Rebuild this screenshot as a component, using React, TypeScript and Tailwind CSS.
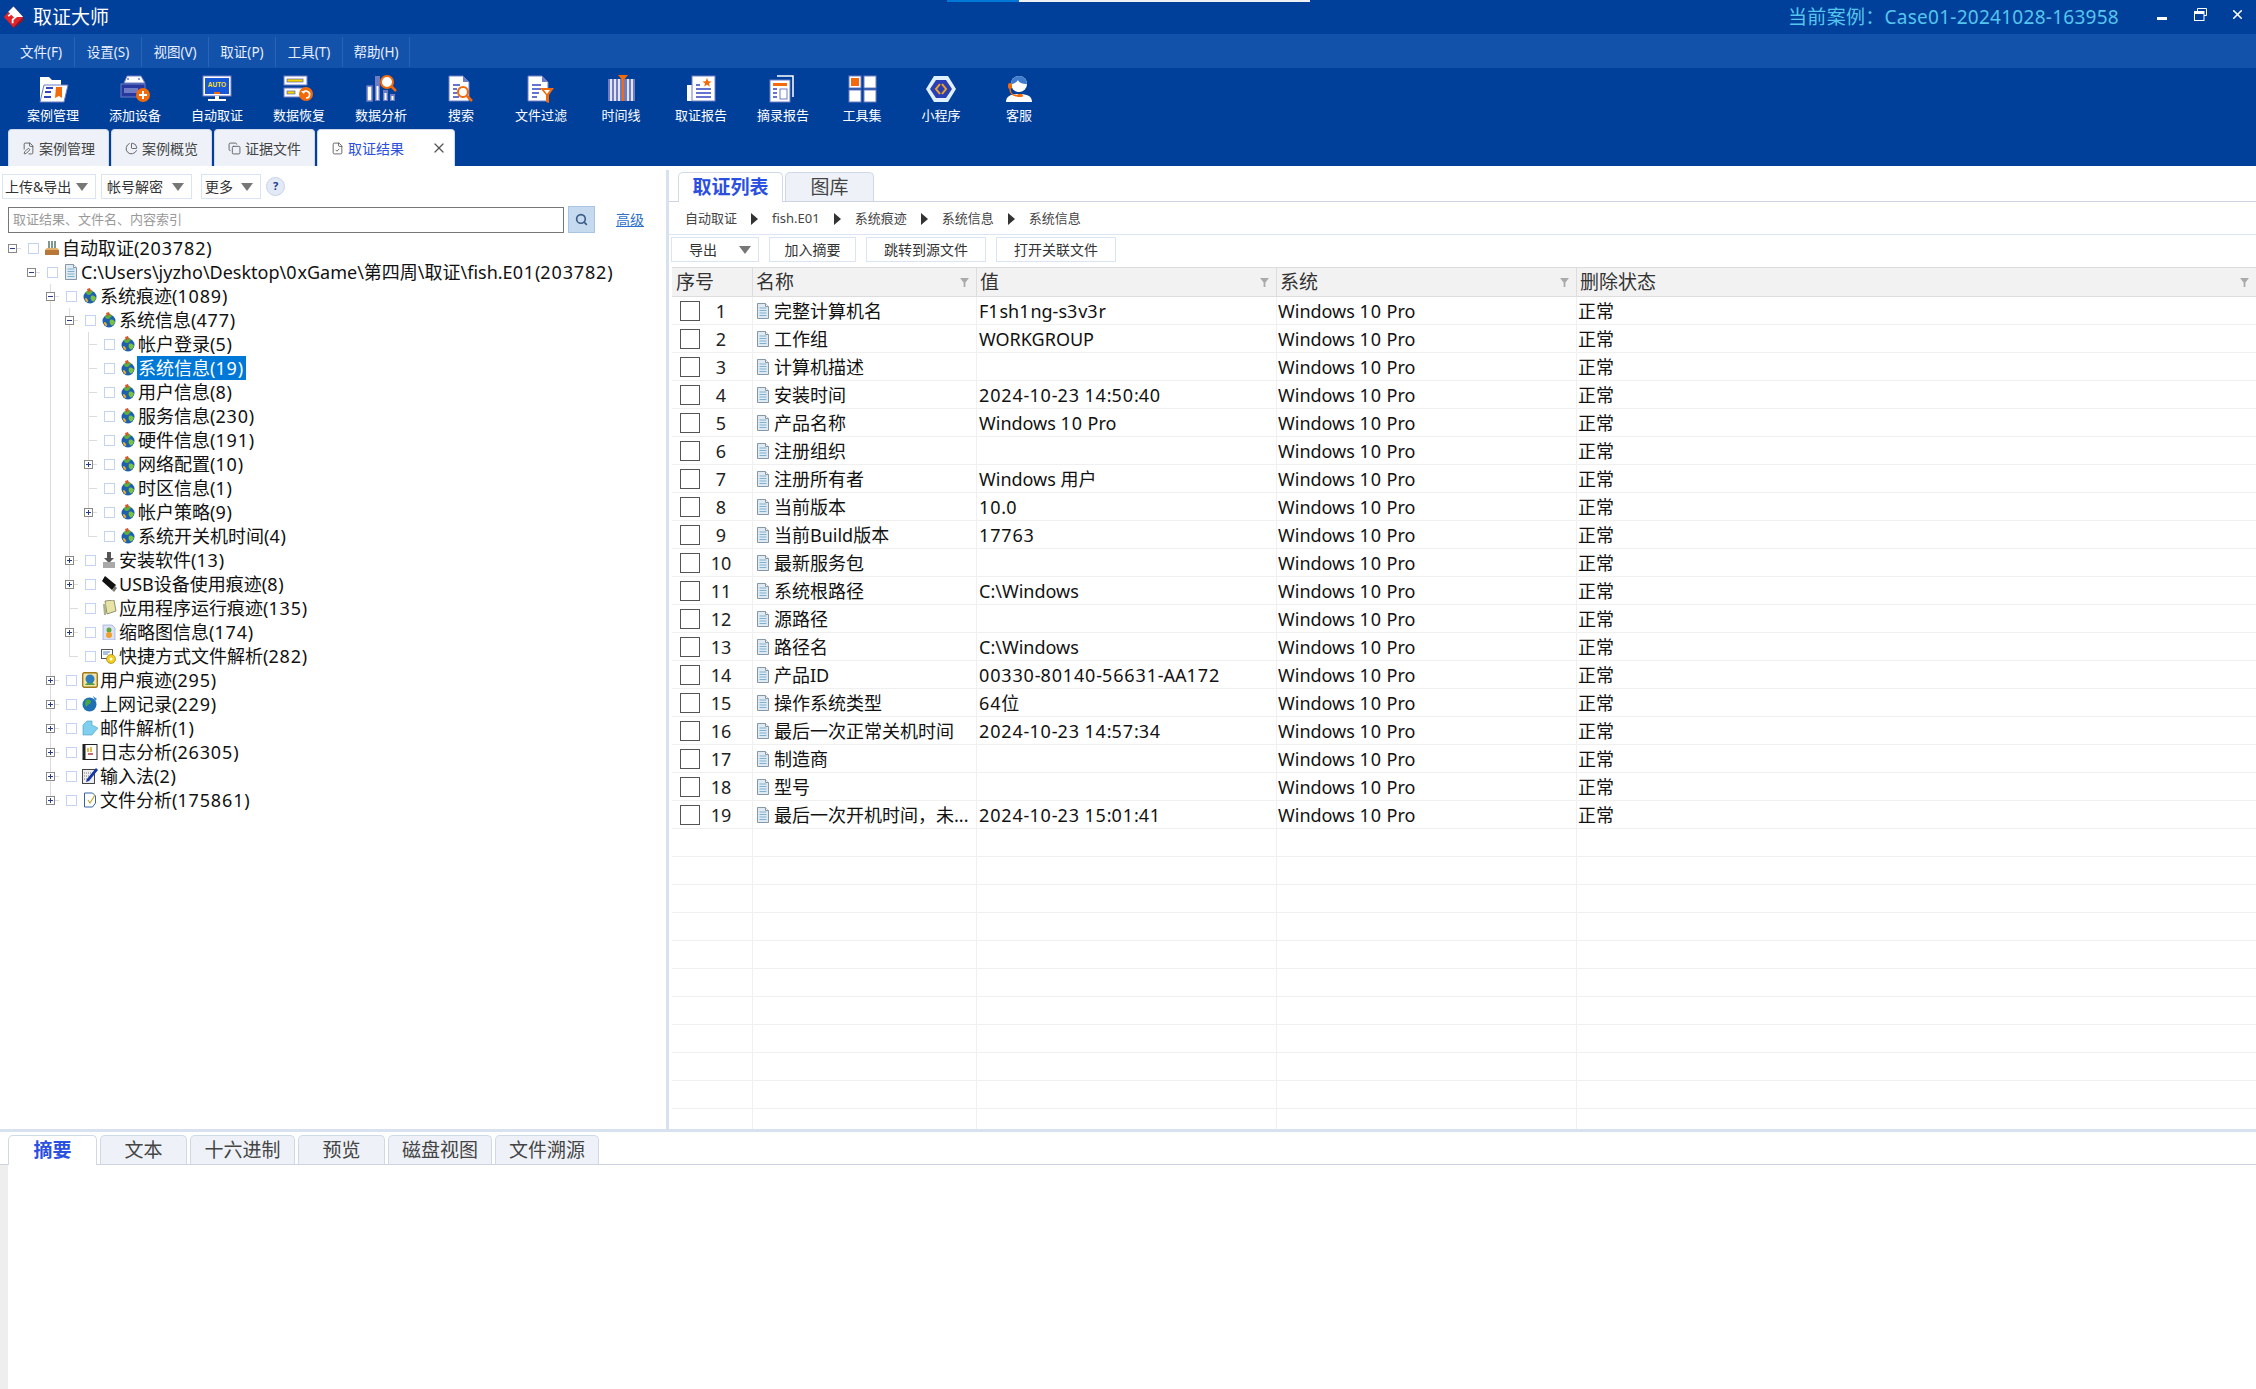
import React from "react";
import { ChartPie, Copy, FileCheck, FilePen, Search, X } from "lucide-react";

const P = "#6f7cc4";
const O = "#f26a0a";

const toolIcons: Record<string, React.ReactNode> = {
  case: (
    <>
      <path d="M3 3h9l3 3h9v20H3z" fill="#fff" />
      <path d="M7 11h24l-4 17H3z" fill="#fff" stroke={P} strokeWidth="1" />
      <path d="M9 14h7M8 18h6M7 23h7" stroke="#3346c0" strokeWidth="2" />
      <path d="M19 13h6v11l-3-2-4 2z" fill={O} />
    </>
  ),
  add: (
    <>
      <path d="M5 9 8 2h14l4 7z" fill="#fff" stroke={P} />
      <rect x="2" y="10" width="24" height="13" fill="#27389f" stroke={P} />
      <rect x="5" y="14" width="14" height="5" fill={P} />
      <circle cx="9" cy="5" r="1" fill={P} />
      <circle cx="20" cy="5" r="1" fill={P} />
      <circle cx="24" cy="21" r="7" fill={O} />
      <path d="M20 21h8M24 17v8" stroke="#fff" strokeWidth="2" />
    </>
  ),
  auto: (
    <>
      <rect x="2" y="2" width="28" height="20" fill="#fff" stroke={P} />
      <rect x="4" y="4" width="24" height="16" fill="#1557d6" />
      <text x="16" y="13" textAnchor="middle" fontSize="6.5" fontWeight="700" fill="#ffe021" fontFamily="Liberation Sans, sans-serif">AUTO</text>
      <rect x="13" y="18" width="6" height="2" fill={O} />
      <rect x="14" y="22" width="4" height="3" fill="#fff" />
      <rect x="7" y="25" width="18" height="2" fill="#fff" />
    </>
  ),
  recover: (
    <>
      <rect x="1" y="2" width="23" height="9" fill="#fff" stroke={P} />
      <rect x="4" y="5" width="16" height="3" fill="#f3d400" stroke="#3346c0" strokeWidth=".6" />
      <rect x="1" y="14" width="23" height="9" fill="#fff" stroke={P} />
      <rect x="4" y="17" width="8" height="3" fill="#f3d400" stroke="#3346c0" strokeWidth=".6" />
      <circle cx="23" cy="20" r="7" fill={O} />
      <path d="M20 19a3.5 3.5 0 1 1 3 5" fill="none" stroke="#fff" strokeWidth="1.6" />
      <path d="m18 17 3 3 1-3z" fill="#fff" />
    </>
  ),
  analyze: (
    <>
      <rect x="2" y="12" width="5" height="15" fill="#fff" stroke={P} strokeWidth="1.5" />
      <rect x="10" y="2" width="5" height="25" fill={P} />
      <rect x="11.5" y="12" width="2" height="14" fill="#fff" />
      <rect x="18" y="16" width="5" height="11" fill={P} />
      <rect x="19.5" y="19" width="2" height="7" fill="#fff" />
      <rect x="25" y="20" width="5" height="7" fill={P} />
      <rect x="26.5" y="22" width="2" height="4" fill="#fff" />
      <circle cx="22" cy="8" r="6" fill="#fff" stroke={O} strokeWidth="2" />
      <path d="m26 12 5 5" stroke={O} strokeWidth="2.5" />
    </>
  ),
  search: (
    <>
      <path d="M4 2h14l6 6v19H4z" fill="#fff" stroke={P} />
      <path d="M18 2v6h6z" fill={P} />
      <path d="M8 11h7M8 15h4M8 19h4M8 23h6" stroke="#3346c0" strokeWidth="1.6" />
      <circle cx="18" cy="18" r="5" fill="#fff" stroke={O} strokeWidth="2.2" />
      <path d="m22 22 5 5" stroke={O} strokeWidth="2.5" />
    </>
  ),
  filter: (
    <>
      <path d="M3 2h14l6 6v19H3z" fill="#fff" stroke={P} />
      <path d="M17 2v6h6z" fill={P} />
      <path d="M7 11h9M7 15h9M7 19h7M7 23h5" stroke="#3346c0" strokeWidth="1.6" />
      <path d="M15 14h14l-5 7v8l-3-1v-7z" fill={O} />
      <path d="m19 16h6l-3 4z" fill="#fff" />
    </>
  ),
  timeline: (
    <>
      <rect x="3" y="5" width="27" height="22" fill={P} />
      <path d="M6 5v22M10 5v22M14 5v22M23 5v22M27 5v22" stroke="#fff" strokeWidth="1.6" />
      <rect x="17" y="5" width="2" height="22" fill={O} />
      <path d="M13 1h10l-5 6z" fill={O} />
    </>
  ),
  report: (
    <>
      <path d="M2 11h6v16H2z" fill="#fff" />
      <rect x="7" y="2" width="23" height="25" fill="#fff" stroke={P} />
      <path d="M11 11h4M11 15h15M11 19h15M11 23h15" stroke="#3346c0" strokeWidth="1.7" />
      <path d="m22 4 1.3 3.2 3.2.2-2.5 2 .8 3.2-2.8-1.8-2.8 1.8.8-3.2-2.5-2 3.2-.2z" fill={O} />
    </>
  ),
  excerpt: (
    <>
      <path d="M10 2h16v21" fill="none" stroke="#fff" strokeWidth="1.5" />
      <rect x="3" y="6" width="20" height="22" fill="#fff" stroke={P} />
      <rect x="6" y="9" width="14" height="3" fill={O} />
      <path d="M6 15h4M6 19h4M6 23h4" stroke="#3346c0" strokeWidth="1.7" />
      <rect x="13" y="15" width="7" height="10" fill="#fff" stroke={P} />
    </>
  ),
  tools: (
    <>
      <rect x="3" y="2" width="12" height="12" fill="#fff" stroke={P} />
      <rect x="5" y="4" width="8" height="8" fill={O} />
      <rect x="18" y="2" width="12" height="12" fill="#fff" stroke={P} />
      <rect x="3" y="16" width="12" height="12" fill="#fff" stroke={P} />
      <rect x="18" y="16" width="12" height="12" fill="#fff" stroke={P} />
    </>
  ),
  mini: (
    <>
      <path d="M9 2h14l8 13-8 13H9L1 15z" fill="#dff0ff" />
      <path d="M11 6h10l6 9-6 9H11L5 15z" fill="#2a3fb5" />
      <path d="m15 10-4 5 4 5M17 10l4 5-4 5" fill="none" stroke="#f2a41c" strokeWidth="2" />
    </>
  ),
  service: (
    <>
      <path d="M3 28c0-6 5-8 13-8s13 2 13 8z" fill="#fff" />
      <circle cx="16" cy="10" r="8" fill="#fff" />
      <path d="M8 10a8 8 0 0 1 16 0c-4 0-8-1-9-4-1 2-4 4-7 4z" fill="#3f7ccb" />
      <rect x="5" y="9" width="4" height="6" rx="2" fill={O} />
      <path d="M7 15c0 5 4 7 8 7" fill="none" stroke={O} strokeWidth="1.5" />
      <rect x="14" y="20" width="6" height="3" rx="1.5" fill={O} />
    </>
  ),
};

const tools = [
  { k: "case", l: "案例管理", w: "w-[82px]" },
  { k: "add", l: "添加设备", w: "w-[82px]" },
  { k: "auto", l: "自动取证", w: "w-[82px]" },
  { k: "recover", l: "数据恢复", w: "w-[82px]" },
  { k: "analyze", l: "数据分析", w: "w-[82px]" },
  { k: "search", l: "搜索", w: "w-[78px]" },
  { k: "filter", l: "文件过滤", w: "w-[82px]" },
  { k: "timeline", l: "时间线", w: "w-[78px]" },
  { k: "report", l: "取证报告", w: "w-[82px]" },
  { k: "excerpt", l: "摘录报告", w: "w-[82px]" },
  { k: "tools", l: "工具集", w: "w-[76px]" },
  { k: "mini", l: "小程序", w: "w-[82px]" },
  { k: "service", l: "客服", w: "w-[74px]" },
];

const menus = ["文件(F)", "设置(S)", "视图(V)", "取证(P)", "工具(T)", "帮助(H)"];

function T({ s }: { s: string }) {
  return (
    <>
      {s.split(/(\d+)/).map((p, i) =>
        i % 2 === 1 ? (
          <span key={i} className="tracking-[0.85px]">{p}</span>
        ) : (
          <React.Fragment key={i}>{p}</React.Fragment>
        )
      )}
    </>
  );
}

function DocIcon({ className }: { className?: string }) {
  return (
    <svg viewBox="0 0 12 16" className={className}>
      <path d="M.5.5h8l3 3v12H.5z" fill="#dfeaf2" stroke="#8797a8" />
      <path d="M8.5.5v3h3" fill="#fff" stroke="#8797a8" />
      <path d="M2.5 5h7M2.5 7.5h7M2.5 10h7M2.5 12.5h7" stroke="#7fb0cf" />
    </svg>
  );
}

function TreeIcon({ kind }: { kind: string }) {
  const c = "w-4 h-4 shrink-0";
  switch (kind) {
    case "case":
      return (
        <svg viewBox="0 0 16 16" className={c}>
          <path d="M4 1h2v8H4zM7 1h2v8H7zM10 1h2v8h-2z" fill="#7f9a8c" />
          <path d="M1 10h14v5H1z" fill="#b8783a" />
          <path d="M1 10l2-2h10l2 2z" fill="#e2b06a" />
        </svg>
      );
    case "doc":
      return <DocIcon className="w-[14px] h-[16px] shrink-0 ml-[1px] mr-[1px]" />;
    case "install":
      return (
        <svg viewBox="0 0 16 16" className={c}>
          <path d="M6 0h4v6h3l-5 5-5-5h3z" fill="#555" />
          <rect x="2" y="10" width="12" height="6" fill="#a9a9a9" />
        </svg>
      );
    case "usb":
      return (
        <svg viewBox="0 0 16 16" className={c}>
          <path d="M4 0 15 9l-4 5L1 5z" fill="#111" />
          <path d="m11 14 2 2 3-4-2-2z" fill="#777" />
        </svg>
      );
    case "app":
      return (
        <svg viewBox="0 0 16 16" className={c}>
          <path d="M4 1 13 0l2 11-9 3z" fill="#e6e3a5" stroke="#79795b" strokeWidth=".8" />
          <path d="M2 4h3v11H3z" fill="#aab48a" />
        </svg>
      );
    case "thumb":
      return (
        <svg viewBox="0 0 16 16" className={c}>
          <path d="M2 1h9l3 3v12H2z" fill="#dbe2f7" stroke="#9aa6d0" strokeWidth=".7" />
          <circle cx="8" cy="6" r="2.5" fill="#5da83a" />
          <circle cx="8" cy="11" r="3" fill="#eda12a" />
        </svg>
      );
    case "link":
      return (
        <svg viewBox="0 0 16 16" className={c}>
          <rect x="0.5" y="1.5" width="11" height="9" fill="#fff" stroke="#555" />
          <path d="M2 4h7M2 6h5" stroke="#5a7fb5" />
          <circle cx="10" cy="11" r="4.5" fill="#f2cf1d" stroke="#8a7a10" strokeWidth=".6" />
          <circle cx="10" cy="11" r="1.5" fill="#fff" />
        </svg>
      );
    case "user":
      return (
        <svg viewBox="0 0 16 16" className={c}>
          <rect x="0.7" y="0.7" width="14.6" height="14.6" rx="1.5" fill="#f5e3a8" stroke="#9c7a18" strokeWidth="1.4" />
          <circle cx="8" cy="7" r="4.5" fill="#2f7fbd" />
          <path d="M3 13c1-3 9-3 10 0z" fill="#4c9c4a" />
        </svg>
      );
    case "web":
      return (
        <svg viewBox="0 0 16 16" className={c}>
          <circle cx="7.5" cy="8.5" r="7" fill="#1f6fb5" />
          <path d="M4 4c3-1 5 0 5 2S6 8 5 10 2 8 4 4z" fill="#4aa545" />
          <path d="M11 0l4 3-2 2z" fill="#3a8ad0" />
        </svg>
      );
    case "mail":
      return (
        <svg viewBox="0 0 16 16" className={c}>
          <path d="M1 5l4-4h5v4l6 3-6 7H1z" fill="#7ed0ee" stroke="#4a9cc4" strokeWidth=".6" />
        </svg>
      );
    case "log":
      return (
        <svg viewBox="0 0 16 16" className={c}>
          <rect x="1" y="0.5" width="14" height="15" fill="#fff" stroke="#222" />
          <rect x="1" y="0.5" width="2.5" height="15" fill="#222" />
          <path d="M6 4v4M9 3v5" stroke="#d9a517" strokeWidth="1.5" />
          <path d="M6 10h5" stroke="#b03a3a" strokeWidth="1.5" />
        </svg>
      );
    case "ime":
      return (
        <svg viewBox="0 0 16 16" className={c}>
          <rect x="0.5" y="1.5" width="12" height="14" fill="#eee" stroke="#444" />
          <path d="M2 5h9M2 8h7M2 11h5" stroke="#777" strokeDasharray="1 1" />
          <path d="M14 0l2 2-9 11-3 1 1-3z" fill="#1536a8" />
        </svg>
      );
    case "file":
      return (
        <svg viewBox="0 0 16 16" className={c}>
          <path d="M2.5 1h8l3 3v7l-3 4h-8z" fill="#fff" stroke="#3565a8" />
          <path d="m6 8 2 3 5-8" fill="none" stroke="#c2a62d" strokeWidth="1.2" />
        </svg>
      );
    default:
      return (
        <svg viewBox="0 0 16 16" className={c}>
          <circle cx="8" cy="9" r="6.5" fill="#1e5fae" />
          <path d="M4 4c3-3 6-3 7 0-2 1-2 3-4 3S4 6 4 4z" fill="#5fae3c" />
          <path d="M9 8c2-1 4 0 5 2-1 3-3 4-4 3S8 10 9 8z" fill="#79c142" />
          <path d="M5 1l3-1 1 3-3 1z" fill="#d8542a" />
          <path d="M3 10c2 0 3 1 3 4-2 0-3-2-3-4z" fill="#f0b429" />
        </svg>
      );
  }
}

type Node = { t: string; l: number; e?: "+" | "-"; i: string; g: number[]; last?: boolean; sel?: boolean };

const tree: Node[] = [
  { t: "自动取证(203782)", l: 0, e: "-", i: "case", g: [] },
  { t: "C:\\Users\\jyzho\\Desktop\\0xGame\\第四周\\取证\\fish.E01(203782)", l: 1, e: "-", i: "doc", g: [] },
  { t: "系统痕迹(1089)", l: 2, e: "-", i: "sys", g: [] },
  { t: "系统信息(477)", l: 3, e: "-", i: "sys", g: [2] },
  { t: "帐户登录(5)", l: 4, i: "sys", g: [2, 3] },
  { t: "系统信息(19)", l: 4, i: "sys", g: [2, 3], sel: true },
  { t: "用户信息(8)", l: 4, i: "sys", g: [2, 3] },
  { t: "服务信息(230)", l: 4, i: "sys", g: [2, 3] },
  { t: "硬件信息(191)", l: 4, i: "sys", g: [2, 3] },
  { t: "网络配置(10)", l: 4, e: "+", i: "sys", g: [2, 3] },
  { t: "时区信息(1)", l: 4, i: "sys", g: [2, 3] },
  { t: "帐户策略(9)", l: 4, e: "+", i: "sys", g: [2, 3] },
  { t: "系统开关机时间(4)", l: 4, i: "sys", g: [2, 3], last: true },
  { t: "安装软件(13)", l: 3, e: "+", i: "install", g: [2] },
  { t: "USB设备使用痕迹(8)", l: 3, e: "+", i: "usb", g: [2] },
  { t: "应用程序运行痕迹(135)", l: 3, i: "app", g: [2] },
  { t: "缩略图信息(174)", l: 3, e: "+", i: "thumb", g: [2] },
  { t: "快捷方式文件解析(282)", l: 3, i: "link", g: [2], last: true },
  { t: "用户痕迹(295)", l: 2, e: "+", i: "user", g: [] },
  { t: "上网记录(229)", l: 2, e: "+", i: "web", g: [] },
  { t: "邮件解析(1)", l: 2, e: "+", i: "mail", g: [] },
  { t: "日志分析(26305)", l: 2, e: "+", i: "log", g: [] },
  { t: "输入法(2)", l: 2, e: "+", i: "ime", g: [] },
  { t: "文件分析(175861)", l: 2, e: "+", i: "file", g: [], last: true },
];

const rows: [string, string][] = [
  ["完整计算机名", "F1sh1ng-s3v3r"],
  ["工作组", "WORKGROUP"],
  ["计算机描述", ""],
  ["安装时间", "2024-10-23 14:50:40"],
  ["产品名称", "Windows 10 Pro"],
  ["注册组织", ""],
  ["注册所有者", "Windows 用户"],
  ["当前版本", "10.0"],
  ["当前Build版本", "17763"],
  ["最新服务包", ""],
  ["系统根路径", "C:\\Windows"],
  ["源路径", ""],
  ["路径名", "C:\\Windows"],
  ["产品ID", "00330-80140-56631-AA172"],
  ["操作系统类型", "64位"],
  ["最后一次正常关机时间", "2024-10-23 14:57:34"],
  ["制造商", ""],
  ["型号", ""],
  ["最后一次开机时间，未...", "2024-10-23 15:01:41"],
];

function Caret({ className = "" }: { className?: string }) {
  return <span className={`inline-block w-0 h-0 border-l-[6px] border-r-[6px] border-t-[8px] border-l-transparent border-r-transparent border-t-[#777] ${className}`} />;
}

function Filter() {
  return (
    <svg viewBox="0 0 10 10" className="w-[9px] h-[9px]">
      <path d="M0 0h10L6 5v5H4V5z" fill="#aaa" />
    </svg>
  );
}

function Arrow() {
  return <span className="w-0 h-0 border-t-[6px] border-b-[6px] border-l-[7px] border-t-transparent border-b-transparent border-l-[#333] mx-[14px]" />;
}

function TreeRow({ n }: { n: Node }) {
  const x = (lv: number) => 12 + lv * 19;
  return (
    <div className="relative flex items-center h-6">
      {n.g.map((lv) => (
        <span key={lv} className="absolute top-0 bottom-0 w-px bg-[#dcdcdc]" style={{ left: x(lv) }} />
      ))}
      {n.l >= 2 && !n.last && <span className="absolute top-0 bottom-0 w-px bg-[#dcdcdc]" style={{ left: x(n.l) }} />}
      {n.l >= 2 && n.last && <span className="absolute top-0 h-3 w-px bg-[#dcdcdc]" style={{ left: x(n.l) }} />}
      <span className="absolute top-3 h-px w-[9px] bg-[#dcdcdc]" style={{ left: x(n.l) }} />
      <span className="shrink-0" style={{ width: 3 + n.l * 19 }} />
      <span className="relative w-[19px] h-6 shrink-0 flex items-center justify-center">
        {n.e && (
          <span className="w-[9px] h-[9px] border border-[#888] bg-white flex items-center justify-center relative">
            <span className="w-[5px] h-px bg-[#2b3a8c]" />
            {n.e === "+" && <span className="absolute w-px h-[5px] bg-[#2b3a8c]" />}
          </span>
        )}
      </span>
      <span className="relative ml-[6px] w-[11px] h-[11px] border border-[#c5d3f2] bg-white shrink-0" />
      <span className="relative ml-[5px] shrink-0"><TreeIcon kind={n.i} /></span>
      <span className={`relative ml-[1px] pl-px pr-[3px] h-6 leading-6 whitespace-nowrap ${n.sel ? "bg-[#0078d7] text-white" : "text-[#111]"}`}><T s={n.t} /></span>
    </div>
  );
}

function Cell({ w, children, cls = "" }: { w: string; children?: React.ReactNode; cls?: string }) {
  return <div className={`${w} h-full shrink-0 border-r border-[#f0f0f0] flex items-center ${cls}`}>{children}</div>;
}

function ActionBtn({ children, w }: { children: React.ReactNode; w: string }) {
  return <div className={`${w} h-[25px] border border-[#dbe4f3] flex items-center justify-center text-[14px] text-[#333]`}>{children}</div>;
}

export default function App() {
  const blanks = Array.from({ length: 11 });
  return (
    <div className="relative w-[2256px] h-[1389px] overflow-hidden bg-white font-['Noto_Sans','Noto_Sans_CJK_SC',sans-serif]">
      <div className="absolute top-0 left-[947px] w-[72px] h-[2px] bg-[#0078d7]" />
      <div className="absolute top-0 left-[1019px] w-[291px] h-[2px] bg-[#eef0f4]" />

      <div className="h-[34px] bg-[#00409a] flex items-center">
        <svg viewBox="0 0 24 26" className="ml-[3px] w-[21px] h-[24px]">
          <path d="M12 1 23 13 12 25 1 13z" fill="#e2232a" />
          <path d="M12 1 23 13 12 13 6 7z" fill="#fff" />
          <path d="M6 12l6-5 5 4-6 5v4" fill="none" stroke="#fff" strokeWidth="2" />
          <path d="M12 25 23 13v4L12 26z" fill="#a3121a" />
        </svg>
        <span className="ml-[9px] text-[19px] leading-none text-white">取证大师</span>
        <span className="ml-auto text-[19px] leading-none text-[#56c5ee] whitespace-nowrap tracking-[0.27px]">当前案例：Case01-20241028-163958</span>
        <span className="ml-[38px] w-[10px] h-[3px] mt-[3px] bg-white" />
        <svg viewBox="0 0 13 13" className="ml-[27px] mb-[6px] w-[13px] h-[13px]">
          <path d="M3.5 3V.5h9v7H10" fill="none" stroke="#fff" />
          <rect x=".5" y="3.5" width="9.5" height="9" fill="#00409a" stroke="#fff" />
          <path d="M.5 5h9.5" stroke="#fff" strokeWidth="2" />
        </svg>
        <X className="ml-[23px] mr-[11px] mb-[5px] w-[15px] h-[15px] text-white" strokeWidth={2.6} />
      </div>

      <div className="h-[34px] bg-[#1352ab] flex items-center pl-[8px] pt-[2px]">
        {menus.map((m) => (
          <div key={m} className="w-[67px] h-[30px] border-r border-[#2a64b6] flex items-center justify-center text-[13.5px] text-[#e8eefc]">{m}</div>
        ))}
      </div>

      <div className="h-[98px] bg-[#00409a] flex flex-col">
        <div className="h-[61px] flex pl-[12px]">
          {tools.map((t) => (
            <div key={t.k} className={`${t.w} flex flex-col items-center shrink-0`}>
              <svg viewBox="0 0 32 30" className="mt-[6px] w-[32px] h-[30px]">{toolIcons[t.k]}</svg>
              <span className="mt-[1px] text-[13px] leading-[20px] text-white whitespace-nowrap">{t.l}</span>
            </div>
          ))}
        </div>
        <div className="h-[37px] flex items-end pl-[8px] gap-[2px]">
          {[
            { l: "案例管理", I: FilePen },
            { l: "案例概览", I: ChartPie },
            { l: "证据文件", I: Copy },
          ].map(({ l, I }) => (
            <div key={l} className="w-[101px] h-[37px] rounded-t-[4px] bg-[#eef2f8] border border-b-0 border-[#cfd9ea] flex items-center justify-center gap-[4px] text-[14px] text-[#444]">
              <I className="w-[13px] h-[13px] text-[#555]" strokeWidth={1.6} />
              {l}
            </div>
          ))}
          <div className="w-[138px] h-[37px] rounded-t-[4px] bg-white border border-b-0 border-[#cfd9ea] flex items-center pl-[13px] gap-[4px] text-[14px] text-[#2b4fe0]">
            <FileCheck className="w-[13px] h-[13px] text-[#555]" strokeWidth={1.6} />
            取证结果
            <X className="ml-[23px] w-[16px] h-[16px] text-[#555]" strokeWidth={1.8} />
          </div>
        </div>
      </div>

      <div className="h-[963px] flex">
        <div className="w-[666px] shrink-0 pt-[8px]">
          <div className="h-[25px] flex items-center text-[14px] text-[#333]">
            <div className="ml-[2px] w-[94px] h-[25px] border border-[#dbe4f3] flex items-center pl-[2px] whitespace-nowrap">上传&amp;导出<Caret className="ml-[5px]" /></div>
            <div className="ml-[5px] w-[91px] h-[25px] border border-[#dbe4f3] flex items-center pl-[5px] whitespace-nowrap">帐号解密<Caret className="ml-[9px]" /></div>
            <div className="ml-[9px] w-[60px] h-[25px] border border-[#dbe4f3] flex items-center pl-[3px] whitespace-nowrap">更多<Caret className="ml-[8px]" /></div>
            <div className="ml-[5px] w-[19px] h-[19px] rounded-full bg-[#e3eaf5] border border-[#c5d3e8] flex items-center justify-center text-[11px] font-bold text-[#17398f]">?</div>
          </div>
          <div className="mt-[7px] h-[27px] flex items-center">
            <div className="ml-[8px] w-[556px] h-[26px] border border-[#777] flex items-center pl-[4px] text-[13px] text-[#999]">取证结果、文件名、内容索引</div>
            <div className="ml-[4px] w-[27px] h-[27px] bg-[#c5d9ef] border border-[#a9c4e4] flex items-center justify-center">
              <Search className="w-[13px] h-[13px] text-[#3a5a86]" strokeWidth={3} />
            </div>
            <span className="ml-[21px] text-[14px] text-[#2f6fce] underline">高级</span>
          </div>
          <div className="mt-[3px] text-[18px]">
            {tree.map((n, i) => (
              <TreeRow key={i} n={n} />
            ))}
          </div>
        </div>

        <div className="w-[3px] shrink-0 mt-[4px] bg-[#d8e1f0]" />

        <div className="flex-1 min-w-0 pt-[6px] flex flex-col">
          <div className="h-[30px] border-b border-[#cdd3e3] flex items-end pl-[9px] gap-[2px] shrink-0">
            <div className="relative top-px w-[105px] h-[30px] bg-white border border-b-0 border-[#cfd9ea] rounded-t-[5px] flex items-center justify-center text-[19px] font-bold text-[#2b4fe0]">取证列表</div>
            <div className="w-[89px] h-[29px] bg-[#eef2f8] border border-b-0 border-[#cfd9ea] rounded-t-[5px] flex items-center justify-center text-[19px] text-[#444]">图库</div>
          </div>
          <div className="h-[33px] border-b border-[#dbe4f3] flex items-center pl-[16px] pt-[2px] text-[13px] text-[#444] shrink-0 whitespace-nowrap">
            自动取证<Arrow />fish.E01<Arrow />系统痕迹<Arrow />系统信息<Arrow />系统信息
          </div>
          <div className="mt-[2px] flex pl-[2px] gap-[10px] shrink-0">
            <div className="w-[88px] h-[25px] border border-[#dbe4f3] flex items-center pl-[17px] text-[14px] text-[#333]">导出<Caret className="ml-[22px]" /></div>
            <ActionBtn w="w-[87px]">加入摘要</ActionBtn>
            <ActionBtn w="w-[120px]">跳转到源文件</ActionBtn>
            <ActionBtn w="w-[120px]">打开关联文件</ActionBtn>
          </div>
          <div className="mt-[5px] ml-[3px] flex-1 min-h-0 overflow-hidden">
            <div className="h-[30px] flex bg-[#f2f2f2] border-t border-b border-[#dddddd] text-[19px] text-[#333]">
              <div className="w-[81px] h-full shrink-0 border-r border-[#dddddd] flex items-center pl-[4px]">序号</div>
              <div className="w-[224px] h-full shrink-0 border-r border-[#dddddd] flex items-center justify-between pl-[3px] pr-[7px]">名称<Filter /></div>
              <div className="w-[300px] h-full shrink-0 border-r border-[#dddddd] flex items-center justify-between pl-[3px] pr-[7px]">值<Filter /></div>
              <div className="w-[300px] h-full shrink-0 border-r border-[#dddddd] flex items-center justify-between pl-[3px] pr-[7px]">系统<Filter /></div>
              <div className="flex-1 h-full flex items-center justify-between pl-[3px] pr-[7px]">删除状态<Filter /></div>
            </div>
            {rows.map(([name, val], i) => (
              <div key={i} className="h-[28px] flex border-b border-[#f0f0f0] text-[18px] text-[#111] whitespace-nowrap">
                <Cell w="w-[81px]">
                  <span className="ml-[8px] w-[20px] h-[20px] border border-[#555] shrink-0" />
                  <span className="relative top-px w-[42px] text-center text-[#222]">{i + 1}</span>
                </Cell>
                <Cell w="w-[224px]" cls="pl-[4px]">
                  <DocIcon className="w-[12px] h-[16px] shrink-0" />
                  <span className="relative top-px ml-[5px]"><T s={name} /></span>
                </Cell>
                <Cell w="w-[300px]" cls="pl-[2px]"><span className="relative top-px"><T s={val} /></span></Cell>
                <Cell w="w-[300px]" cls="pl-[1px]"><span className="relative top-px"><T s="Windows 10 Pro" /></span></Cell>
                <div className="flex-1 h-full flex items-center pl-[1px]"><span className="relative top-px">正常</span></div>
              </div>
            ))}
            {blanks.map((_, i) => (
              <div key={i} className="h-[28px] flex border-b border-[#f0f0f0]">
                <Cell w="w-[81px]" />
                <Cell w="w-[224px]" />
                <Cell w="w-[300px]" />
                <Cell w="w-[300px]" />
              </div>
            ))}
          </div>
        </div>
      </div>

      <div className="h-[3px] bg-[#d8e1f0]" />

      <div className="mt-[3px] h-[30px] border-b border-[#cdd3e3] flex items-end pl-[8px] gap-[3px]">
        <div className="relative top-px w-[89px] h-[30px] bg-white border border-b-0 border-[#cfd9ea] rounded-t-[5px] flex items-center justify-center text-[19px] font-bold text-[#2b4fe0]">摘要</div>
        {[
          { l: "文本", w: "w-[87px]" },
          { l: "十六进制", w: "w-[105px]" },
          { l: "预览", w: "w-[87px]" },
          { l: "磁盘视图", w: "w-[104px]" },
          { l: "文件溯源", w: "w-[104px]" },
        ].map((t) => (
          <div key={t.l} className={`${t.w} h-[29px] bg-[#eef2f8] border border-b-0 border-[#cfd9ea] rounded-t-[5px] flex items-center justify-center text-[19px] text-[#444]`}>{t.l}</div>
        ))}
      </div>
      <div className="h-[225px] flex">
        <div className="w-[8px] bg-[#eeeeee]" />
        <div className="flex-1 bg-white" />
      </div>
    </div>
  );
}
